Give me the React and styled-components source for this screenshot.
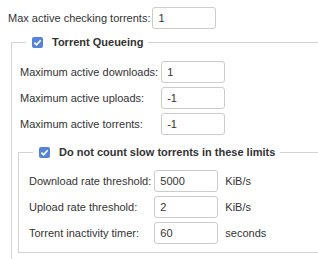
import styled, { createGlobalStyle } from "styled-components"

const GlobalStyle = createGlobalStyle`
  html, body {
    margin: 0;
    padding: 0;
    overflow: hidden;
    background: #fff;
  }
  body {
    font-family: "Liberation Sans", Arial, sans-serif;
    font-size: 11px;
    color: #333;
  }
`

const Page = styled.div`
  width: 420px;
  padding: 7px 0 0 8px;
`

const Grid = styled.div`
  display: grid;
  grid-template-columns: repeat(${p => p.$cols}, max-content);
  column-gap: ${p => p.$gap}px;
  row-gap: 4px;
  align-items: center;
`

const Label = styled.label`
  white-space: nowrap;
`

const Input = styled.input`
  box-sizing: border-box;
  width: 64px;
  height: 22px;
  margin: 0;
  padding: 0 5px;
  border: 1px solid #cccccc;
  border-radius: 3px;
  font: inherit;
  color: #333;
  outline: none;
`

const Unit = styled.span`
  margin-left: 4px;
`

const Fieldset = styled.fieldset`
  margin: ${p => p.$mt}px 0 0 ${p => p.$ml}px;
  padding: ${p => p.$pt}px 0 ${p => p.$pb}px ${p => p.$pl}px;
  border: 1px solid #d4d4d4;
  min-width: 0;
`

const Legend = styled.legend`
  display: flex;
  align-items: center;
  gap: 9px;
  margin-left: ${p => p.$offset}px;
  padding: 0 5px 0 6px;
  line-height: 14px;
  font-weight: bold;
`

const Box = styled.span`
  display: inline-flex;
  width: 11px;
  height: 11px;
  border-radius: 2px;
  background: #5584d6;
`

const Check = () => (
  <Box>
    <svg width="11" height="11" viewBox="0 0 11 11">
      <path d="M2.4 5.7 L4.5 7.8 L8.7 3.2" fill="none" stroke="#fff" strokeWidth="1.7" />
    </svg>
  </Box>
)

const Field = ({ label, value, unit }) => (
  <>
    <Label>{label}</Label>
    <Input defaultValue={value} />
    {unit !== undefined && <Unit>{unit}</Unit>}
  </>
)

const App = () => (
  <Page>
    <GlobalStyle />
    <Grid $cols={2} $gap={2}>
      <Field label="Max active checking torrents:" value="1" />
    </Grid>
    <Fieldset $mt={6} $ml={3} $pl={8} $pt={12} $pb={20}>
      <Legend $offset={6}>
        <Check />
        Torrent Queueing
      </Legend>
      <Grid $cols={2} $gap={3}>
        <Field label="Maximum active downloads:" value="1" />
        <Field label="Maximum active uploads:" value="-1" />
        <Field label="Maximum active torrents:" value="-1" />
      </Grid>
      <Fieldset $mt={10} $ml={-2} $pl={10} $pt={11} $pb={8}>
        <Legend $offset={4}>
          <Check />
          Do not count slow torrents in these limits
        </Legend>
        <Grid $cols={3} $gap={3}>
          <Field label="Download rate threshold:" value="5000" unit="KiB/s" />
          <Field label="Upload rate threshold:" value="2" unit="KiB/s" />
          <Field label="Torrent inactivity timer:" value="60" unit="seconds" />
        </Grid>
      </Fieldset>
    </Fieldset>
  </Page>
)

export default App
